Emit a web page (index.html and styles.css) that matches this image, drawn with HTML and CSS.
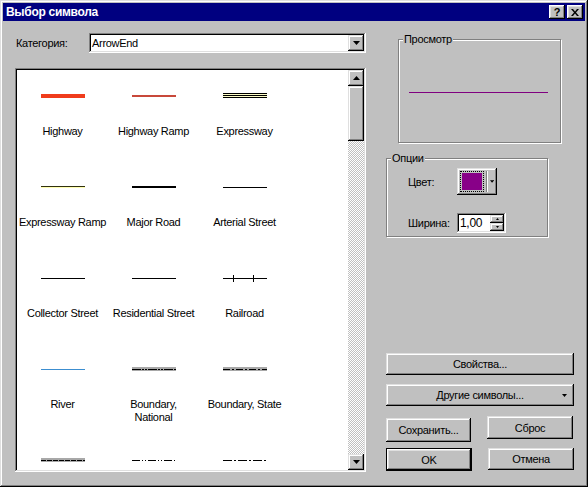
FILE: index.html
```html
<!DOCTYPE html>
<html lang="ru">
<head>
    <meta charset="UTF-8">
    <title>Выбор символа</title>
    <link rel="stylesheet" href="styles.css">
</head>
<body>
    <div class="window">
        <!-- Title bar -->
        <div class="titlebar">
            <span class="title">Выбор символа</span>
            <div class="title-buttons">
                <span class="tbtn">?</span>
                <span class="tbtn">
                    <svg width="8" height="7" viewBox="0 0 8 7"><path d="M0 0h2l2 2.5 2-2.5h2L5 3.5 8 7H6L4 4.5 2 7H0l3-3.5z" fill="#000"/></svg>
                </span>
            </div>
        </div>

        <div class="content">
            <!-- Left side: category + symbol list -->
            <div class="left">
                <div class="category">
                    <span class="cat-label">Категория:</span>
                    <div class="combo">
                        <span>ArrowEnd</span>
                        <span class="drop-btn">
                            <svg width="7" height="4" viewBox="0 0 7 4"><path d="M0 0h7L3.5 4z" fill="#000"/></svg>
                        </span>
                    </div>
                </div>

                <div class="list">
                    <div class="grid">
                        <div class="sym">
                            <svg width="44" height="10"><rect x="0" y="3" width="44" height="4" fill="#f03c1c"/></svg>
                            <span class="name">Highway</span>
                        </div>
                        <div class="sym">
                            <svg width="44" height="10"><rect x="0" y="4" width="44" height="2" fill="#c8483a"/></svg>
                            <span class="name">Highway Ramp</span>
                        </div>
                        <div class="sym">
                            <svg width="44" height="10">
                                <rect x="0" y="2" width="44" height="5" fill="#ffffc8"/>
                                <rect x="0" y="2" width="44" height="1" fill="#000"/>
                                <rect x="0" y="4" width="44" height="1" fill="#000"/>
                                <rect x="0" y="6" width="44" height="1" fill="#000"/>
                            </svg>
                            <span class="name">Expressway</span>
                        </div>

                        <div class="sym">
                            <svg width="44" height="10">
                                <rect x="0" y="5" width="44" height="1" fill="#ffffb0"/>
                                <rect x="0" y="4" width="44" height="1" fill="#303010"/>
                            </svg>
                            <span class="name">Expressway Ramp</span>
                        </div>
                        <div class="sym">
                            <svg width="44" height="10"><rect x="0" y="4" width="44" height="2" fill="#000"/></svg>
                            <span class="name">Major Road</span>
                        </div>
                        <div class="sym">
                            <svg width="44" height="10"><rect x="0" y="5" width="44" height="1" fill="#000"/></svg>
                            <span class="name">Arterial Street</span>
                        </div>

                        <div class="sym">
                            <svg width="44" height="10"><rect x="0" y="5" width="44" height="1" fill="#000"/></svg>
                            <span class="name">Collector Street</span>
                        </div>
                        <div class="sym">
                            <svg width="44" height="10"><rect x="0" y="5" width="44" height="1" fill="#000"/></svg>
                            <span class="name">Residential Street</span>
                        </div>
                        <div class="sym">
                            <svg width="44" height="10">
                                <rect x="0" y="5" width="44" height="1" fill="#000"/>
                                <rect x="10" y="2" width="1" height="7" fill="#000"/>
                                <rect x="30" y="2" width="1" height="7" fill="#000"/>
                            </svg>
                            <span class="name">Railroad</span>
                        </div>

                        <div class="sym">
                            <svg width="44" height="10"><rect x="0" y="5" width="44" height="1" fill="#3c8ed0"/></svg>
                            <span class="name">River</span>
                        </div>
                        <div class="sym">
                            <svg width="44" height="10">
                                <rect x="0" y="3" width="44" height="4" fill="#a8a8a8"/>
                                <line x1="0" y1="5.5" x2="44" y2="5.5" stroke="#000" stroke-dasharray="9 1 2 1 2 1"/>
                            </svg>
                            <span class="name">Boundary,<br>National</span>
                        </div>
                        <div class="sym">
                            <svg width="44" height="10">
                                <rect x="0" y="3" width="44" height="4" fill="#a8a8a8"/>
                                <line x1="0" y1="5.5" x2="44" y2="5.5" stroke="#000" stroke-dasharray="7 2 2 2"/>
                            </svg>
                            <span class="name">Boundary, State</span>
                        </div>

                        <!-- last row is cut off by the list edge: only the symbols show -->
                        <div class="sym">
                            <svg width="44" height="10">
                                <rect x="0" y="3" width="44" height="4" fill="#a8a8a8"/>
                                <line x1="0" y1="5.5" x2="44" y2="5.5" stroke="#000" stroke-dasharray="5 1"/>
                            </svg>
                        </div>
                        <div class="sym">
                            <svg width="44" height="10">
                                <line x1="0" y1="5.5" x2="44" y2="5.5" stroke="#000" stroke-dasharray="8 2 1 2 1 2"/>
                            </svg>
                        </div>
                        <div class="sym">
                            <svg width="44" height="10">
                                <line x1="0" y1="5.5" x2="44" y2="5.5" stroke="#000" stroke-dasharray="9 2 2 2"/>
                            </svg>
                        </div>
                    </div>

                    <div class="scrollbar">
                        <span class="sb-btn">
                            <svg width="7" height="4" viewBox="0 0 7 4"><path d="M3.5 0L7 4H0z" fill="#000"/></svg>
                        </span>
                        <span class="sb-thumb"></span>
                        <span class="sb-track"></span>
                        <span class="sb-btn">
                            <svg width="7" height="4" viewBox="0 0 7 4"><path d="M0 0h7L3.5 4z" fill="#000"/></svg>
                        </span>
                    </div>
                </div>
            </div>

            <!-- Right side: preview, options, buttons -->
            <div class="right">
                <div class="group preview">
                    <span class="group-label">Просмотр</span>
                    <div class="preview-line"></div>
                </div>

                <div class="group options">
                    <span class="group-label">Опции</span>
                    <span>Цвет:</span>
                    <div class="color-btn">
                        <span class="focus"><span class="swatch"></span></span>
                        <span class="sep"></span>
                        <svg class="color-arrow" width="5" height="3" viewBox="0 0 5 3"><path d="M0 0h5L2.5 3z" fill="#000"/></svg>
                    </div>
                    <span>Ширина:</span>
                    <div class="spin">
                        <span class="spin-value">1,00</span>
                        <span class="spin-btns">
                            <span class="spin-btn"><svg width="3" height="2" viewBox="0 0 3 2"><path d="M1.5 0L3 2H0z" fill="#000"/></svg></span>
                            <span class="spin-btn"><svg width="3" height="2" viewBox="0 0 3 2"><path d="M0 0h3L1.5 2z" fill="#000"/></svg></span>
                        </span>
                    </div>
                </div>

                <div class="btn btn-props">Свойства...</div>
                <div class="btn btn-more">
                    <span></span>
                    <span>Другие символы...</span>
                    <svg width="5" height="3" viewBox="0 0 5 3"><path d="M0 0h5L2.5 3z" fill="#000"/></svg>
                </div>

                <div class="btn-row first-row">
                    <div class="btn btn-save">Сохранить...</div>
                    <div class="btn btn-reset">Сброс</div>
                </div>
                <div class="btn-row">
                    <div class="btn btn-ok">OK</div>
                    <div class="btn btn-cancel">Отмена</div>
                </div>
            </div>
        </div>
    </div>
</body>
</html>
```

FILE: styles.css
```css
body {
    margin: 0;
    font-family: "Liberation Sans", Arial, sans-serif;
    font-size: 11px;
    letter-spacing: -0.3px;
    color: #000;
    background-color: #c0c0c0;
}

.window {
    width: 588px;
    height: 487px;
    box-sizing: border-box;
    padding: 3px;
    background-color: #c0c0c0;
    box-shadow: inset -1px -1px #000, inset 1px 1px #dfdfdf, inset -2px -2px #808080, inset 2px 2px #fff;
    overflow: hidden;
}

/* Title bar */
.titlebar {
    height: 18px;
    background-color: #000080;
    color: #fff;
    display: flex;
    align-items: center;
    justify-content: space-between;
    padding: 0 2px 0 3px;
}

.title {
    font-weight: bold;
    font-size: 12px;
}

.title-buttons {
    display: flex;
    gap: 2px;
}

.tbtn {
    width: 16px;
    height: 14px;
    background-color: #c0c0c0;
    color: #000;
    font-weight: bold;
    font-size: 11px;
    display: flex;
    align-items: center;
    justify-content: center;
    box-shadow: inset -1px -1px #000, inset 1px 1px #fff, inset -2px -2px #808080, inset 2px 2px #dfdfdf;
}

/* Shared 3D looks */
.btn,
.drop-btn,
.sb-btn,
.sb-thumb,
.color-btn,
.spin-btn {
    background-color: #c0c0c0;
    box-shadow: inset -1px -1px #000, inset 1px 1px #dfdfdf, inset -2px -2px #808080, inset 2px 2px #fff;
}

.combo,
.list,
.spin {
    background-color: #fff;
    box-shadow: inset -1px -1px #fff, inset 1px 1px #808080, inset -2px -2px #dfdfdf, inset 2px 2px #000;
}

.content {
    display: flex;
    gap: 20px;
    padding: 12px 0 0 12px;
}

/* Left column */
.left {
    width: 351px;
}

.category {
    display: flex;
    align-items: center;
    height: 20px;
}

.cat-label {
    width: 73px;
    padding-left: 1px;
}

.combo {
    width: 277px;
    height: 20px;
    box-sizing: border-box;
    display: flex;
    align-items: center;
    justify-content: space-between;
    padding: 2px 2px 2px 3px;
}

.drop-btn {
    width: 16px;
    height: 16px;
    display: flex;
    align-items: center;
    justify-content: center;
}

.list {
    margin-top: 15px;
    height: 404px;
    box-sizing: border-box;
    padding: 2px;
    display: flex;
}

.grid {
    flex: 1;
    display: grid;
    grid-template-columns: repeat(3, 91px);
    grid-auto-rows: 91px;
    align-content: start;
    overflow: hidden;
}

.sym {
    display: flex;
    flex-direction: column;
    align-items: center;
}

.sym svg {
    margin-top: 21px;
    display: block;
}

.name {
    margin-top: 24px;
    line-height: 13px;
    text-align: center;
    white-space: nowrap;
}

.scrollbar {
    width: 16px;
    display: flex;
    flex-direction: column;
}

.sb-btn {
    width: 16px;
    height: 16px;
    display: flex;
    align-items: center;
    justify-content: center;
}

.sb-thumb {
    height: 55px;
}

.sb-track {
    flex: 1;
    background-image: repeating-conic-gradient(#fff 0 25%, #c0c0c0 0 50%);
    background-size: 2px 2px;
}

/* Right column */
.right {
    width: 188px;
}

.group {
    position: relative;
    box-sizing: border-box;
    border: 1px solid #808080;
    box-shadow: inset 1px 1px #fff, 1px 1px #fff;
}

.group-label {
    position: absolute;
    top: -7px;
    left: 4px;
    padding: 0 1px;
    line-height: 13px;
    background-color: #c0c0c0;
}

.preview {
    margin: 6px 0 0 12px;
    width: 163px;
    height: 104px;
}

.preview-line {
    margin: 52px 0 0 10px;
    width: 139px;
    height: 1px;
    background-color: #800080;
}

.options {
    margin-top: 15px;
    width: 162px;
    height: 79px;
    padding: 6px 0 0 21px;
    display: grid;
    grid-template-columns: 49px auto;
    row-gap: 12px;
    align-items: center;
    justify-items: start;
}

.color-btn {
    width: 40px;
    height: 27px;
    box-sizing: border-box;
    padding: 3px;
    display: flex;
    align-items: center;
}

.focus {
    display: block;
    border: 1px dotted #000;
    padding: 1px;
}

.swatch {
    display: block;
    width: 20px;
    height: 17px;
    background-color: #880088;
}

.sep {
    width: 1px;
    height: 21px;
    margin-left: 2px;
    background-color: #808080;
    border-right: 1px solid #fff;
}

.color-arrow {
    margin-left: 2px;
}

.spin {
    width: 49px;
    height: 20px;
    box-sizing: border-box;
    padding: 2px;
    display: flex;
    align-items: center;
    justify-content: space-between;
}

.spin-value {
    padding-left: 1px;
    font-size: 12px;
}

.spin-btns {
    display: flex;
    flex-direction: column;
    width: 14px;
    height: 16px;
}

.spin-btn {
    flex: 1;
    display: flex;
    align-items: center;
    justify-content: center;
}

/* Buttons */
.btn {
    box-sizing: border-box;
    height: 22px;
    display: flex;
    align-items: center;
    justify-content: center;
}

.btn-props {
    margin-top: 116px;
}

.btn-more {
    margin-top: 9px;
    display: grid;
    grid-template-columns: 20px 1fr 20px;
    justify-items: center;
}

.btn-row {
    display: flex;
    align-items: flex-start;
    gap: 16px;
    margin-top: 6px;
}

.first-row {
    margin-top: 10px;
    height: 26px;
}

.btn-save {
    width: 85px;
    height: 24px;
    margin-top: 2px;
}

.btn-reset {
    width: 86px;
    height: 23px;
}

.btn-ok {
    width: 86px;
    height: 23px;
    box-shadow: inset 0 0 0 1px #000, inset -2px -2px #000, inset 2px 2px #fff, inset -3px -3px #808080, inset 3px 3px #dfdfdf;
}

.btn-cancel {
    width: 86px;
}
```
